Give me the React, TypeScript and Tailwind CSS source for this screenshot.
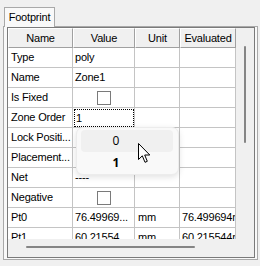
import React from "react";

const FONT = { fontFamily: '"Liberation Sans", Arial, sans-serif' };

type Row = { name: string; value?: string; check?: boolean; unit?: string; evald?: string; focus?: boolean };

const rows: Row[] = [
  { name: "Type", value: "poly" },
  { name: "Name", value: "Zone1" },
  { name: "Is Fixed", check: true },
  { name: "Zone Order", value: "1", focus: true },
  { name: "Lock Positi..." },
  { name: "Placement..." },
  { name: "Net", value: "----" },
  { name: "Negative", check: true },
  { name: "Pt0", value: "76.49969...", unit: "mm", evald: "76.499694mm" },
  { name: "Pt1", value: "60.21554...", unit: "mm", evald: "60.215544mm" },
];

function HeaderCell({ w, label }: { w: string; label: string }) {
  return (
    <div
      className={`${w} h-[20px] shrink-0 bg-[#f0f0f0] border-t border-l border-t-white border-l-white border-r border-b border-r-[#a0a0a0] border-b-[#a0a0a0] flex items-center justify-center text-[11px] tracking-[-0.2px] text-black overflow-hidden whitespace-nowrap`}
    >
      {label}
    </div>
  );
}

function Checkbox() {
  return <div className="w-[14px] h-[14px] border border-[#7a7a7a] bg-white" />;
}

export default function App() {
  return (
    <div className="w-[260px] h-[266px] bg-[#f0f0f0] relative overflow-hidden flex flex-col" style={FONT}>
      {/* Tab */}
      <div className="mt-[7px] ml-[4px] w-[51px] h-[20px] -mb-px relative z-10 bg-[#f9f9f9] border-t border-l border-r border-[#a9a9a9] flex items-center justify-center text-[11px] tracking-[-0.2px] text-black">
        Footprint
      </div>
      {/* Panel */}
      <div className="ml-[3px] w-[255px] h-[234px] border border-[#a9a9a9] bg-[#f9f9f9] pl-[3px] pt-0">
        {/* Grid */}
        <div className="w-[248px] h-[231px] border border-[#7a7a7a] bg-[#f0f0f0] flex flex-col">
          <div className="flex h-[211px]">
            <div className="w-[232px] h-[211px] overflow-hidden flex flex-col">
              <div className="flex">
                <HeaderCell w="w-[65px]" label="Name" />
                <HeaderCell w="w-[62px]" label="Value" />
                <HeaderCell w="w-[45px]" label="Unit" />
                <HeaderCell w="w-[56px]" label="Evaluated" />
              </div>
              {rows.map((r) => (
                <div key={r.name} className="flex h-[20px] shrink-0 text-[11px] tracking-[-0.2px] text-black">
                  <div className="w-[65px] h-[20px] shrink-0 bg-white border-r border-b border-[#c4c4c4] pl-[3px] flex items-center whitespace-nowrap overflow-hidden">
                    {r.name}
                  </div>
                  <div className="w-[62px] h-[20px] shrink-0 bg-white border-r border-b border-[#c4c4c4] flex items-center whitespace-nowrap overflow-hidden relative">
                    {r.check ? (
                      <div className="w-full flex justify-center">
                        <Checkbox />
                      </div>
                    ) : r.focus ? (
                      <div className="ml-px mt-px w-[60px] h-[18px] border border-dotted border-black pl-px flex items-center">
                        {r.value}
                      </div>
                    ) : (
                      <span className="pl-[2px]">{r.value}</span>
                    )}
                  </div>
                  <div className="w-[45px] h-[20px] shrink-0 bg-white border-r border-b border-[#c4c4c4] pl-[3px] flex items-center whitespace-nowrap overflow-hidden">
                    {r.unit}
                  </div>
                  <div className="w-[56px] h-[20px] shrink-0 bg-white border-r border-b border-[#c4c4c4] pl-[2px] flex items-center whitespace-nowrap overflow-hidden">
                    {r.evald}
                  </div>
                </div>
              ))}
            </div>
            {/* Vertical scrollbar */}
            <div className="w-[14px] h-[211px] bg-[#f0f0f0] pl-[4px] pt-[18px]">
              <div className="w-[2px] h-[97px] rounded-full bg-[#858585]" />
            </div>
          </div>
          {/* Horizontal scrollbar */}
          <div className="h-[18px] bg-[#f0f0f0] pt-[7px] pl-[18px]">
            <div className="w-[169px] h-[2px] rounded-full bg-[#858585]" />
          </div>
        </div>
      </div>

      {/* Dropdown popup */}
      <div className="absolute left-[76px] top-[127px] w-[103px] h-[48px] rounded-[7px] bg-[#f9f9f9] border border-[#ececec] shadow-[0_2px_6px_rgba(0,0,0,0.12)] pt-[2px] pl-[4px] flex flex-col">
        <div className="w-[92px] h-[22px] rounded-[4px] bg-[#f0f0f0] flex items-center">
          <span className="w-[70px] text-center text-[12px] text-black" style={{ fontFamily: '"Open Sans", "Liberation Sans", sans-serif' }}>0</span>
        </div>
        <div className="w-[92px] h-[22px] flex items-center">
          <span className="w-[70px] text-center text-[12px] font-bold text-black" style={{ fontFamily: '"Open Sans", "Liberation Sans", sans-serif' }}>1</span>
        </div>
      </div>

      {/* Mouse cursor */}
      <svg className="absolute left-[138px] top-[143px]" width="13" height="21" viewBox="0 0 13 21">
        <path
          d="M0.5 0.5 L0.5 16.5 L4.3 12.8 L7 19.3 L9.3 18.3 L6.7 12 L11.8 12 Z"
          fill="white"
          stroke="black"
          strokeWidth="1"
          strokeLinejoin="miter"
        />
      </svg>
    </div>
  );
}
